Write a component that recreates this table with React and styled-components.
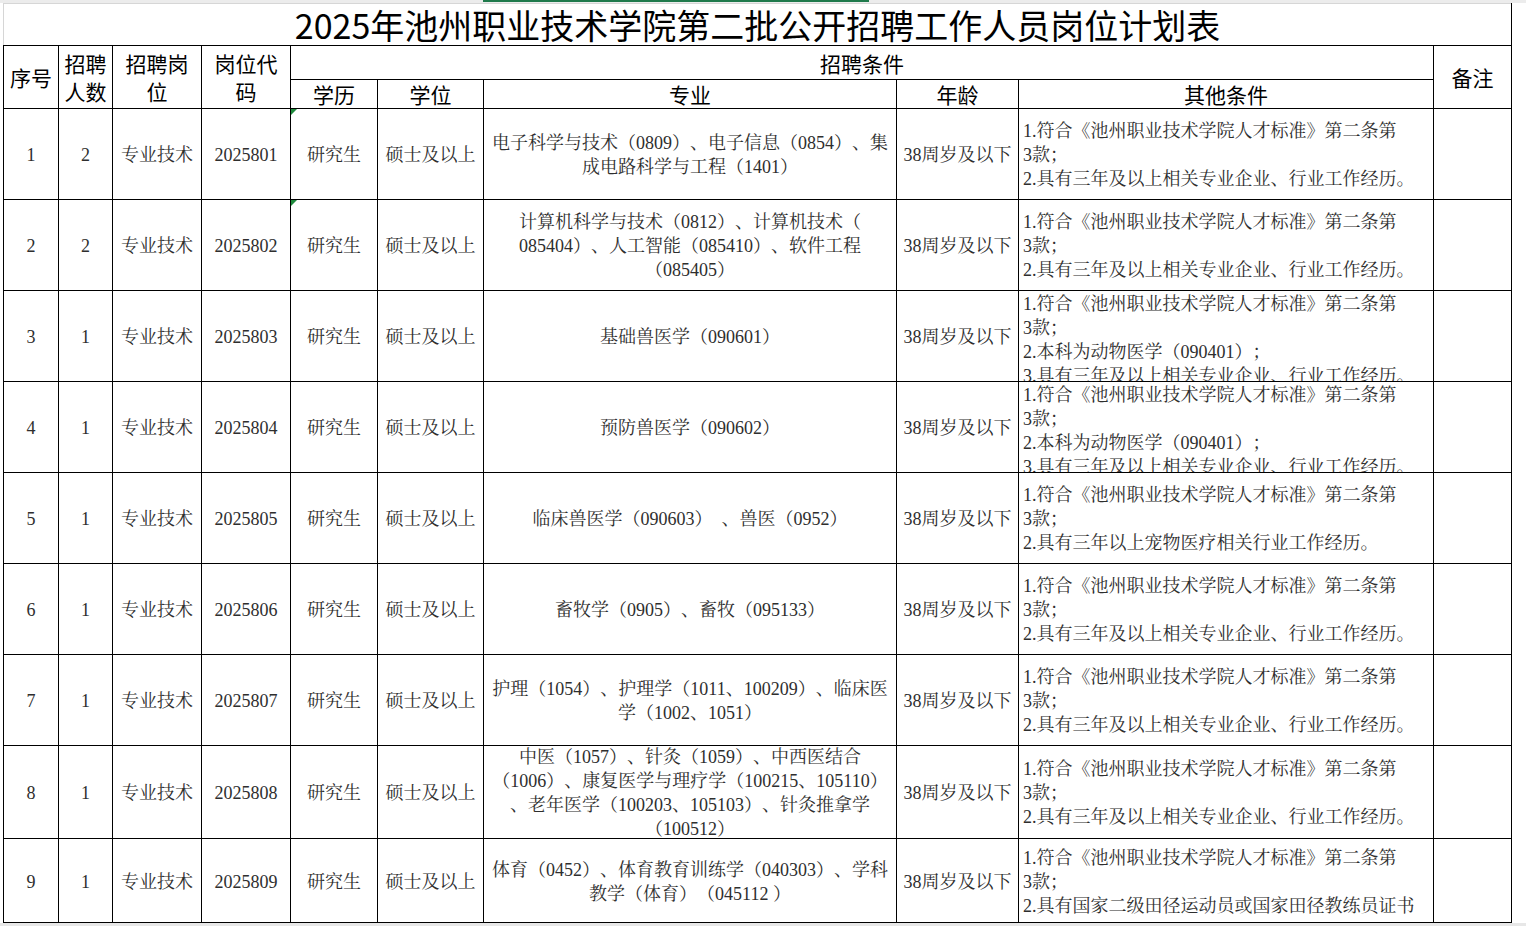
import React from "react";
import styled, { createGlobalStyle } from "styled-components";

const GlobalStyle = createGlobalStyle`
  body {
    margin: 0;
    background: #e7e7e7;
  }
`;

const SERIF = `"Liberation Serif", "Noto Serif CJK SC", "Noto Sans CJK SC", serif`;
const SANS = `"Noto Sans CJK SC", "Noto Sans", sans-serif`;

const Sheet = styled.div`
  width: 1526px;
  background: #fff;
  overflow: hidden;
  text-spacing-trim: space-all;
`;

const TopStrip = styled.div`
  display: flex;
  height: 3px;
  background: #ececec;
`;

const Selection = styled.div`
  margin-left: 483px;
  width: 386px;
  height: 2px;
  background: #1f7a4c;
`;

const Grid = styled.table`
  margin-left: 3px;
  width: 1508px;
  border-collapse: collapse;
  table-layout: fixed;
`;

const Col = styled.col`
  width: ${(p) => p.$w}px;
`;

const TitleCell = styled.th`
  padding: 0;
  border-top: 1px solid #d6d6d6;
  border-left: 1px solid #d6d6d6;
  border-right: 1px solid #000;
  border-bottom: 1px solid #000;
  height: 41px;
  font-family: ${SANS};
  font-size: 34px;
  font-weight: 400;
  line-height: 41px;
  color: #000;
  text-align: center;
  white-space: nowrap;
`;

const HeadCell = styled.th`
  padding: 0;
  border: 1px solid #000;
  height: ${(p) => p.$h}px;
  font-family: ${SANS};
  font-size: 21px;
  font-weight: 400;
  line-height: 28px;
  color: #000;
  text-align: center;
  vertical-align: middle;
  white-space: nowrap;
`;

const Cell = styled.td`
  position: relative;
  padding: 0;
  border: 1px solid #000;
  vertical-align: top;
`;

const Box = styled.div`
  height: ${(p) => p.$h}px;
  display: flex;
  flex-direction: column;
  justify-content: ${(p) => (p.$top ? "flex-start" : "center")};
  align-items: ${(p) => (p.$left ? "flex-start" : "center")};
  padding: ${(p) => (p.$top ? "1px" : "2px")} ${(p) => (p.$left ? 4 : 2)}px 0;
  box-sizing: border-box;
  overflow: hidden;
  font-family: ${SERIF};
  font-size: 18px;
  line-height: 24px;
  color: #2e2e2e;
  white-space: pre;
`;

const Line = styled.span`
  display: block;
`;

const Marker = styled.span`
  position: absolute;
  left: 0;
  top: 0;
  width: 0;
  height: 0;
  border-top: 6px solid #1e8a3c;
  border-right: 6px solid transparent;
`;

const COLS = [55, 54, 89, 89, 87, 106, 413, 122, 415, 78];

const L1 = "1.符合《池州职业技术学院人才标准》第二条第";
const STD = [L1, "3款；", "2.具有三年及以上相关专业企业、行业工作经历。"];
const VET = [
  L1,
  "3款；",
  "2.本科为动物医学（090401）；",
  "3.具有三年及以上相关专业企业、行业工作经历。",
];

const ROWS = [
  {
    n: 1, count: 2, code: "2025801", h: 91, mark: true,
    major: ["电子科学与技术（0809）、电子信息（0854）、集", "成电路科学与工程（1401）"],
    other: STD,
  },
  {
    n: 2, count: 2, code: "2025802", h: 91, mark: true,
    major: ["计算机科学与技术（0812）、计算机技术（", "085404）、人工智能（085410）、软件工程", "（085405）"],
    other: STD,
  },
  { n: 3, count: 1, code: "2025803", h: 91, major: ["基础兽医学（090601）"], other: VET, top: true },
  { n: 4, count: 1, code: "2025804", h: 91, major: ["预防兽医学（090602）"], other: VET, top: true },
  {
    n: 5, count: 1, code: "2025805", h: 91,
    major: ["临床兽医学（090603）  、兽医（0952）"],
    other: [L1, "3款；", "2.具有三年以上宠物医疗相关行业工作经历。"],
  },
  { n: 6, count: 1, code: "2025806", h: 91, major: ["畜牧学（0905）、畜牧（095133）"], other: STD },
  {
    n: 7, count: 1, code: "2025807", h: 91,
    major: ["护理（1054）、护理学（1011、100209）、临床医", "学（1002、1051）"],
    other: STD,
  },
  {
    n: 8, count: 1, code: "2025808", h: 93,
    major: [
      "中医（1057）、针灸（1059）、中西医结合",
      "（1006）、康复医学与理疗学（100215、105110）",
      "、老年医学（100203、105103）、针灸推拿学",
      "（100512）",
    ],
    other: STD,
  },
  {
    n: 9, count: 1, code: "2025809", h: 84,
    major: ["体育（0452）、体育教育训练学（040303）、学科", "教学（体育）（045112 ）"],
    other: [L1, "3款；", "2.具有国家二级田径运动员或国家田径教练员证书"],
  },
];

const Lines = ({ items }) =>
  items.map((t, i) => <Line key={i}>{t}</Line>);

const DataRow = ({ row }) => {
  const h = row.h - 1;
  const simple = [row.n, row.count, "专业技术", row.code];
  return (
    <tr>
      {simple.map((v, i) => (
        <Cell key={i}>
          <Box $h={h}>{v}</Box>
        </Cell>
      ))}
      <Cell>
        {row.mark && <Marker />}
        <Box $h={h}>研究生</Box>
      </Cell>
      <Cell>
        <Box $h={h}>硕士及以上</Box>
      </Cell>
      <Cell>
        <Box $h={h}>
          <Lines items={row.major} />
        </Box>
      </Cell>
      <Cell>
        <Box $h={h}>38周岁及以下</Box>
      </Cell>
      <Cell>
        <Box $h={h} $left $top={row.top}>
          <Lines items={row.other} />
        </Box>
      </Cell>
      <Cell>
        <Box $h={h} />
      </Cell>
    </tr>
  );
};

const App = () => (
  <>
    <GlobalStyle />
    <Sheet>
      <TopStrip>
        <Selection />
      </TopStrip>
      <Grid>
        <colgroup>
          {COLS.map((w, i) => (
            <Col key={i} $w={w} />
          ))}
        </colgroup>
        <thead>
          <tr>
            <TitleCell colSpan={10}>
              2025年池州职业技术学院第二批公开招聘工作人员岗位计划表
            </TitleCell>
          </tr>
          <tr>
            <HeadCell rowSpan={2} $h={33}>序号</HeadCell>
            <HeadCell rowSpan={2} $h={33}>招聘<br />人数</HeadCell>
            <HeadCell rowSpan={2} $h={33}>招聘岗<br />位</HeadCell>
            <HeadCell rowSpan={2} $h={33}>岗位代<br />码</HeadCell>
            <HeadCell colSpan={5} $h={33}>招聘条件</HeadCell>
            <HeadCell rowSpan={2} $h={33}>备注</HeadCell>
          </tr>
          <tr>
            <HeadCell $h={28}>学历</HeadCell>
            <HeadCell $h={28}>学位</HeadCell>
            <HeadCell $h={28}>专业</HeadCell>
            <HeadCell $h={28}>年龄</HeadCell>
            <HeadCell $h={28}>其他条件</HeadCell>
          </tr>
        </thead>
        <tbody>
          {ROWS.map((r) => (
            <DataRow key={r.n} row={r} />
          ))}
        </tbody>
      </Grid>
    </Sheet>
  </>
);

export default App;
